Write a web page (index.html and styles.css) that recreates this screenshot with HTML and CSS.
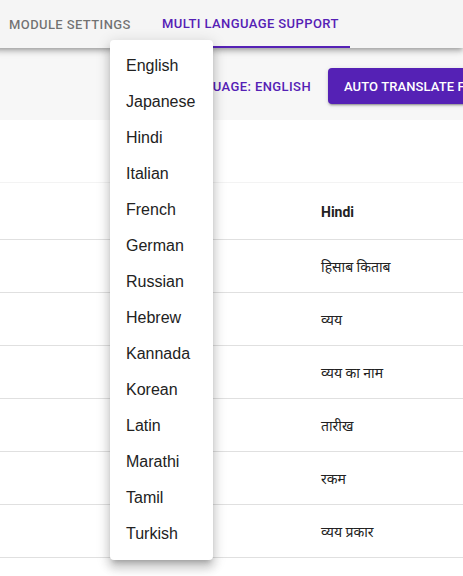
FILE: index.html
```html
<!DOCTYPE html>
<html>
<head>
<meta charset="utf-8">
<link rel="stylesheet" href="styles.css">
</head>
<body>
<div class="page">
  <div class="tabs">
    <div class="tab">Module Settings</div>
    <div class="tab active">Multi Language Support</div>
  </div>
  <div class="toolbar">
    <div class="label">Language: English</div>
    <button class="btn">Auto Translate From English</button>
  </div>
  <div class="table">
    <div class="row top"></div>
    <div class="row head"><div class="cell"></div><div class="cell">Hindi</div></div>
    <div class="row"><div class="cell"></div><div class="cell">हिसाब किताब</div></div>
    <div class="row"><div class="cell"></div><div class="cell">व्यय</div></div>
    <div class="row"><div class="cell"></div><div class="cell">व्यय का नाम</div></div>
    <div class="row"><div class="cell"></div><div class="cell">तारीख</div></div>
    <div class="row"><div class="cell"></div><div class="cell">रकम</div></div>
    <div class="row"><div class="cell"></div><div class="cell">व्यय प्रकार</div></div>
  </div>
  <ul class="menu">
    <li>English</li>
    <li>Japanese</li>
    <li>Hindi</li>
    <li>Italian</li>
    <li>French</li>
    <li>German</li>
    <li>Russian</li>
    <li>Hebrew</li>
    <li>Kannada</li>
    <li>Korean</li>
    <li>Latin</li>
    <li>Marathi</li>
    <li>Tamil</li>
    <li>Turkish</li>
  </ul>
</div>
</body>
</html>
```
FILE: styles.css
```css
html, body {
  margin: 0;
  padding: 0;
  background: #fff;
  overflow: hidden;
}
.page {
  position: relative;
  width: 463px;
  height: 576px;
  overflow: hidden;
  font-family: Roboto, "Noto Sans", sans-serif;
}
.tabs {
  height: 48px;
  display: flex;
  background: #f5f5f5;
  box-shadow: 0 2px 4px -1px rgba(0,0,0,0.2), 0 4px 5px 0 rgba(0,0,0,0.14), 0 1px 10px 0 rgba(0,0,0,0.12);
  position: relative;
  z-index: 2;
  margin-left: -7px;
}
.tab {
  box-sizing: border-box;
  width: 153px;
  height: 48px;
  padding: 0 16px;
  display: flex;
  align-items: center;
  font-size: 13px;
  font-weight: 500;
  letter-spacing: 0.4px;
  text-transform: uppercase;
  color: rgba(0,0,0,0.55);
  white-space: nowrap;
}
.tab.active {
  color: #5521b5;
  border-bottom: 2px solid #5521b5;
  padding-top: 1px;
  width: 204px;
}
.toolbar {
  height: 72px;
  box-sizing: border-box;
  padding-top: 4px;
  background: #f7f7f7;
  display: flex;
  align-items: center;
  gap: 17px;
}
.label {
  width: 311px;
  flex-shrink: 0;
  text-align: right;
  font-size: 13px;
  font-weight: 500;
  letter-spacing: 0.4px;
  text-transform: uppercase;
  color: #5521b5;
  white-space: nowrap;
}
.btn {
  flex-shrink: 0;
  height: 36px;
  padding: 0 16px;
  border: none;
  border-radius: 4px;
  background: #5521b5;
  color: #fff;
  font-family: Roboto, sans-serif;
  font-size: 13px;
  font-weight: 500;
  letter-spacing: 0.1px;
  text-transform: uppercase;
  white-space: nowrap;
  box-shadow: 0 3px 1px -2px rgba(0,0,0,0.2), 0 2px 2px 0 rgba(0,0,0,0.14), 0 1px 5px 0 rgba(0,0,0,0.12);
}
.table {
  background: #fff;
}
.row {
  display: grid;
  grid-template-columns: 305px 1fr;
  height: 53px;
  box-sizing: border-box;
  border-bottom: 1px solid #e0e0e0;
  align-items: center;
}
.row.top {
  height: 63px;
  border-bottom: 1px solid #f3f3f3;
}
.row.head {
  height: 57px;
  padding-top: 2px;
}
.cell {
  padding: 0 16px;
  font-size: 14px;
  color: #222;
  font-family: Roboto, "Noto Sans", "DejaVu Sans", sans-serif;
  white-space: nowrap;
}
.row.head .cell {
  font-weight: 700;
}
.menu {
  position: absolute;
  top: 40px;
  left: 110px;
  width: 103px;
  box-sizing: border-box;
  margin: 0;
  padding: 8px 0;
  list-style: none;
  background: #fff;
  border-radius: 4px;
  z-index: 5;
  box-shadow: 0 5px 5px -3px rgba(0,0,0,0.2), 0 8px 10px 1px rgba(0,0,0,0.14), 0 3px 14px 2px rgba(0,0,0,0.12);
}
.menu li {
  height: 36px;
  padding: 0 16px;
  display: flex;
  align-items: center;
  font-family: "Liberation Sans", Arial, sans-serif;
  font-size: 16px;
  color: #222;
  white-space: nowrap;
}
```
